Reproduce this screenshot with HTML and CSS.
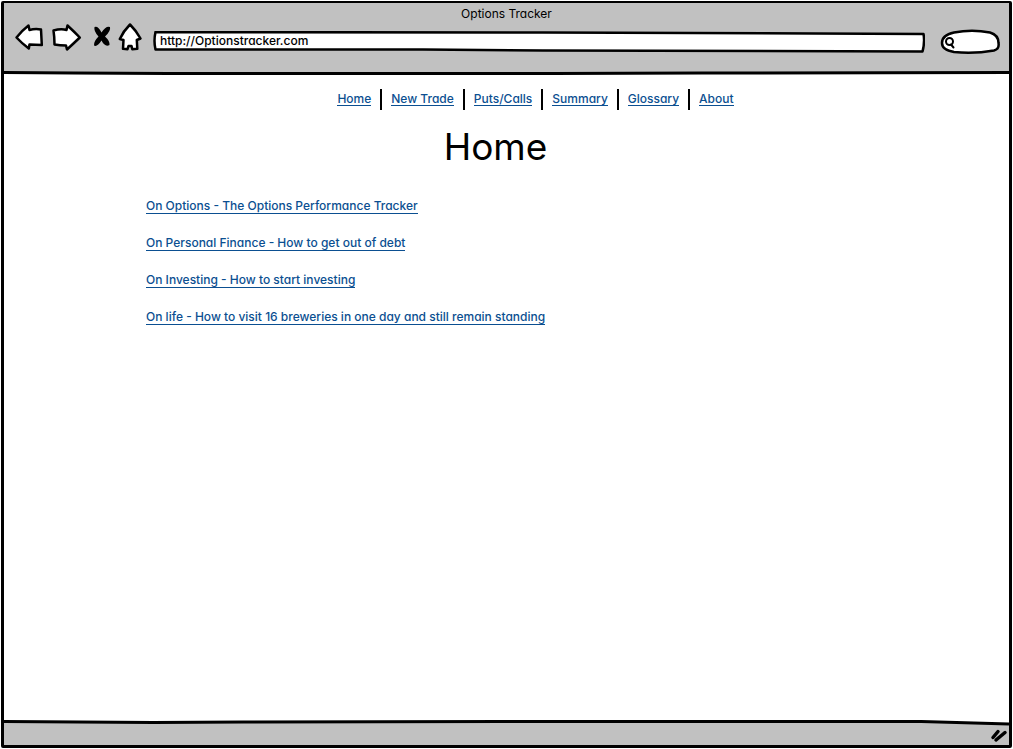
FILE: index.html
```html
<!DOCTYPE html>
<html lang="en">
<head>
<meta charset="utf-8">
<title>Options Tracker</title>
<link rel="stylesheet" href="styles.css">
</head>
<body>
<div class="window">
  <header class="chrome">
    <div class="window-title">Options Tracker</div>
    <div class="toolbar">
      <div class="buttons">
        <button class="tool" type="button" aria-label="Back">
          <svg width="30" height="30" viewBox="0 0 30 30"><path class="ink" d="M2.500 15.500 Q8 8.500 14.500 3.500 L15.500 8 Q21 6.500 27 7.500 L27.800 23 Q21 22.500 15.500 22.500 L14.800 26.500 Q8 21.500 2.500 15.500Z"/></svg>
        </button>
        <button class="tool" type="button" aria-label="Forward">
          <svg width="30" height="30" viewBox="0 0 30 30"><path class="ink" d="M1.500 8.500 Q9 6.500 14.500 8 L15.500 3.500 Q22 9.500 27.800 15.500 Q21 22 15 27.500 L14 23.500 Q8 23.500 2.500 22.500 Q2.500 15 1.500 8.500Z"/></svg>
        </button>
        <button class="tool tool-stop" type="button" aria-label="Stop">
          <svg width="20" height="30" viewBox="0 0 20 30"><path class="solid" d="M2.500 5 Q6 3.500 9.500 10.500 Q14 3.500 18 5 Q19 9 13 14.500 Q18 19 17.500 23 Q13 25.500 9.500 18.500 Q5 25.500 2 23.500 Q1.500 19.500 6.500 14.500 Q1.500 9 2.500 5Z"/></svg>
        </button>
        <button class="tool" type="button" aria-label="Home page">
          <svg width="26" height="30" viewBox="0 0 26 30"><path class="ink" d="M12 2.500 Q18.500 9 22.500 16.500 L18.800 18 L19.300 26.800 L14.300 27.200 L13.500 24 L10.500 24 L9.500 27.200 L5 26.800 L5.500 18 L1.800 17 Q5.500 9 12 2.500Z"/></svg>
        </button>
      </div>
      <div class="address">
        <svg class="outline" viewBox="0 0 772 22" preserveAspectRatio="none"><path class="ink" d="M2.500 1 L390 1.500 L770.500 3 Q772 11 769.500 20.500 L390 19.500 L270 18.500 L2.500 18.500 Q0.500 10 2.500 1Z"/></svg>
        <input class="url" type="text" aria-label="Address" value="http://Optionstracker.com">
      </div>
      <div class="search">
        <svg class="outline" viewBox="0 0 60 26"><path class="ink" d="M14 3.500 Q32 0 50 3.500 Q58.500 6 58.500 14 Q59.500 20 54 21.500 Q34 25 14 23 Q2 21 2 14 Q2 6 14 3.500Z"/><circle class="lens" cx="9.500" cy="12.500" r="3.500"/><path class="lens" d="M11 15.500 L13.500 18.500"/></svg>
        <input class="query" type="search" aria-label="Search">
      </div>
    </div>
    <svg class="rule" viewBox="0 0 1008 4" preserveAspectRatio="none"><path class="line" d="M0 1.500 L70 2 L165 2.500 L550 2.500 L700 2 L1008 1.500"/></svg>
  </header>

  <main class="page">
    <nav class="nav">
      <a href="#home">Home</a>
      <a href="#new-trade">New Trade</a>
      <a href="#puts-calls">Puts/Calls</a>
      <a href="#summary">Summary</a>
      <a href="#glossary">Glossary</a>
      <a href="#about">About</a>
    </nav>
    <h1 class="heading">Home</h1>
    <ul class="articles">
      <li><a href="#options">On Options - The Options Performance Tracker</a></li>
      <li><a href="#finance">On Personal Finance - How to get out of debt</a></li>
      <li><a href="#investing">On Investing - How to start investing</a></li>
      <li><a href="#life">On life - How to visit 16 breweries in one day and still remain standing</a></li>
    </ul>
  </main>

  <footer class="status">
    <svg class="status-edge" viewBox="0 0 1008 6" preserveAspectRatio="none"><path class="fill" d="M0 2 L150 3 L500 1.500 L920 1.500 L1008 4 L1008 6 L0 6Z"/><path class="line" d="M0 1.500 L150 2.500 L240 2 L500 1.500 L920 1.500 L1008 4"/></svg>
    <svg class="grip" width="18" height="16" viewBox="0 0 18 16"><path d="M3 10.500 L8 4.500 M6 13 L15 5.500"/></svg>
  </footer>
</div>
</body>
</html>
```
FILE: styles.css
```css
* {
  box-sizing: border-box;
}

body {
  margin: 0;
  background: #fff;
  color: #000;
  font-family: Inter, "Liberation Sans", sans-serif;
  font-feature-settings: "cv11";
  font-size: 12px;
  font-weight: 500;
  line-height: 20px;
}

.window {
  display: flex;
  flex-direction: column;
  min-height: calc(100vh - 2px);
  margin: 1px;
  border: 3px solid #000;
  border-top-width: 2px;
  border-radius: 2px;
}

.chrome {
  padding-top: 1px;
  background: #c1c1c1;
}

.window-title {
  font-weight: 400;
  text-align: center;
}

.toolbar {
  display: flex;
  align-items: flex-start;
  gap: 15px;
  height: 47px;
  margin: 0 9px 0 10px;
}

.buttons {
  display: flex;
  gap: 8px;
  margin-right: -6px;
}

.tool {
  display: flex;
  height: 30px;
  margin-top: -2px;
  padding: 0;
  border: 0;
  background: none;
  cursor: pointer;
}

.tool-stop {
  margin-right: -2px;
  margin-left: 2px;
}

.ink {
  fill: #fff;
  stroke: #000;
  stroke-width: 2.500;
  stroke-linejoin: round;
}

.solid {
  fill: #000;
}

.lens {
  fill: none;
  stroke: #000;
  stroke-width: 2;
  stroke-linecap: round;
}

.address,
.search {
  position: relative;
}

.address {
  flex: 1;
  height: 22px;
  margin-top: 7px;
}

.search {
  flex: none;
  width: 60px;
  height: 26px;
  margin-top: 5px;
}

.outline {
  position: absolute;
  inset: 0;
  width: 100%;
  height: 100%;
}

.url,
.query {
  position: relative;
  display: block;
  width: 100%;
  height: 20px;
  border: 0;
  background: none;
  color: inherit;
  font: inherit;
  font-feature-settings: inherit;
}

.url {
  padding: 0 7px;
}

.query {
  height: 26px;
  padding: 0 6px 0 18px;
}

.rule {
  display: block;
  width: 100%;
  height: 4px;
  background: linear-gradient(#c1c1c1 50%, #fff 50%);
}

.line {
  fill: none;
  stroke: #000;
  stroke-width: 3;
}

.page {
  flex: 1;
}

a {
  border-bottom: 1px solid #0b4f91;
  color: #0b4f91;
  text-decoration: none;
}

.nav {
  display: flex;
  justify-content: center;
  margin-top: 14px;
  padding-left: 58px;
  line-height: 13px;
}

.nav a {
  position: relative;
  margin: 3px 10px 4px;
}

.nav a + a::before {
  content: "";
  position: absolute;
  top: -3px;
  left: -11px;
  width: 2px;
  height: 21px;
  background: #000;
}

.heading {
  margin: 14px 0 0;
  padding-right: 22px;
  font-size: 37px;
  font-weight: 400;
  line-height: 46px;
  text-align: center;
}

.articles {
  display: grid;
  gap: 17px;
  margin: 26px 0 0;
  padding: 0 0 0 142px;
  list-style: none;
}

.status {
  display: flex;
  flex-direction: column;
  align-items: flex-end;
  height: 25px;
  background: #c1c1c1;
}

.status-edge {
  display: block;
  width: 100%;
  height: 6px;
  background: #fff;
}

.fill {
  fill: #c1c1c1;
}

.grip {
  margin: 1px 1px 0 0;
  fill: none;
  stroke: #000;
  stroke-width: 3.500;
  stroke-linecap: round;
}
```
